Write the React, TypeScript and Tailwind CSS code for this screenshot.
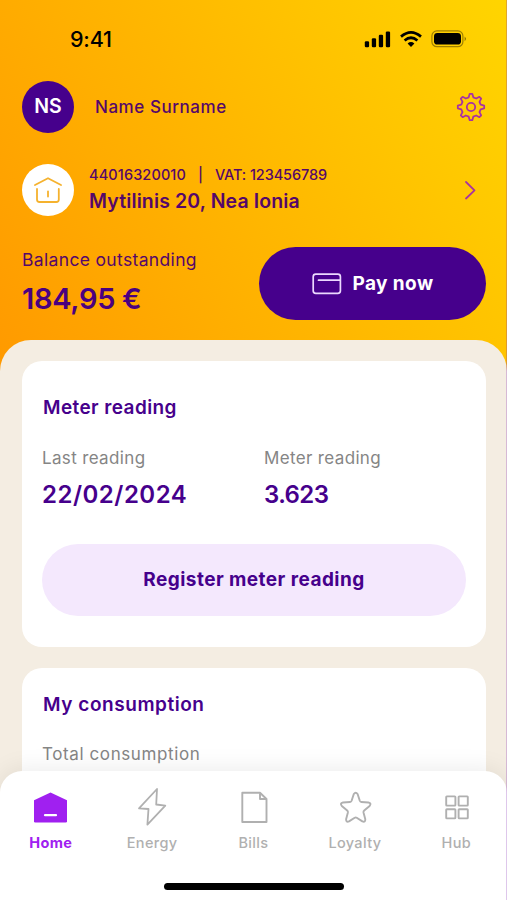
const navItems = [
  { name: "Home", icon: HomeIcon, active: true },
  { name: "Energy", icon: EnergyIcon, active: false },
  { name: "Bills", icon: BillsIcon, active: false },
  { name: "Loyalty", icon: LoyaltyIcon, active: false },
  { name: "Hub", icon: HubIcon, active: false },
];

const readings = [
  { label: "Last reading", value: "22/02/2024", valueClass: "tracking-[0.5px]" },
  { label: "Meter reading", value: "3.623", valueClass: "tracking-[-0.6px]" },
];

function HomeIcon() {
  return (
    <svg width="36" height="36" viewBox="0 0 36 36">
      <path d="M17.5 3.6 34 11.2V32.2Q34 33.5 32.7 33.5H2.3Q1 33.5 1 32.2V11.2Z" fill="#a020f0" />
      <path d="M12 26.2h11" stroke="#fff" strokeWidth="2.2" strokeLinecap="round" />
    </svg>
  );
}

function EnergyIcon() {
  return (
    <svg width="36" height="40" viewBox="0 0 36 40" fill="none" stroke="#b0b0b0" strokeWidth="1.8" strokeLinejoin="round">
      <path d="M23 2 5 21.3 14.5 22 13.4 37.6 31.3 18.6 22.2 17.5Z" />
    </svg>
  );
}

function BillsIcon() {
  return (
    <svg width="36" height="36" viewBox="0 0 36 36" fill="none" stroke="#b0b0b0" strokeWidth="1.9" strokeLinejoin="round">
      <path d="M6.3 3.8H24L30.5 10V33H6.3Z" />
      <path d="M24 4.3V10H30" />
    </svg>
  );
}

function LoyaltyIcon() {
  return (
    <svg width="36" height="36" viewBox="0 0 36 36" fill="none" stroke="#b0b0b0" strokeWidth="1.9" strokeLinejoin="round">
      <path transform="translate(0.4 0.6)" d="M16.4 4.4Q18.3 1.8 20.2 4.4L22.4 11.2Q22.8 12.3 24 12.4L31 12.9Q34.4 13.5 32.2 16.4L26.8 20.9Q25.9 21.7 26.1 22.9L27.9 29.6Q28 33 25 31.8L19.3 28.2Q18.3 27.6 17.3 28.2L11.6 31.8Q8.6 33 8.7 29.6L10.5 22.9Q10.7 21.7 9.8 20.9L4.4 16.4Q2.2 13.5 5.6 12.9L12.6 12.4Q13.8 12.3 14.2 11.2Z" />
    </svg>
  );
}

function HubIcon() {
  return (
    <svg width="36" height="36" viewBox="0 0 36 36" fill="none" stroke="#b0b0b0" strokeWidth="1.9">
      <rect x="8.2" y="7.4" width="9.2" height="9.2" rx="0.6" />
      <rect x="20.6" y="7.4" width="9.2" height="9.2" rx="0.6" />
      <rect x="8.2" y="20.2" width="9.2" height="9.2" rx="0.6" />
      <rect x="20.6" y="20.2" width="9.2" height="9.2" rx="0.6" />
    </svg>
  );
}

function StatusBar() {
  return (
    <div className="flex h-[78px] items-center justify-between pl-[70px] pr-[40px] text-black">
      <span className="pt-px text-[21.5px] font-medium leading-none tracking-[-0.2px]">9:41</span>
      <svg width="103" height="20" viewBox="0 0 103 20">
        <rect x="0.8" y="12.3" width="4.3" height="6" rx="1.2" />
        <rect x="7.8" y="9.2" width="4.3" height="9.1" rx="1.2" />
        <rect x="14.8" y="5.8" width="4.3" height="12.5" rx="1.2" />
        <rect x="21.8" y="2.5" width="4.3" height="15.8" rx="1.2" />
        <path d="M37 7.6Q47-.8 57 7.6M40.6 11.5Q47 6 53.4 11.5" fill="none" stroke="#000" strokeWidth="2.7" />
        <path d="M43.6 14.4Q47 11.7 50.4 14.4L47 18Z" />
        <rect x="67.9" y="1.9" width="31" height="15.8" rx="5" fill="none" stroke="#000" strokeOpacity="0.38" strokeWidth="1.2" />
        <rect x="70" y="4" width="27" height="11.6" rx="3.4" />
        <path d="M100.6 7.4Q103.4 9.8 100.6 12.2Z" fillOpacity="0.45" />
      </svg>
    </div>
  );
}

function GearIcon() {
  return (
    <svg width="30" height="30" viewBox="0 0 30 30" fill="none" stroke="#a832a2" strokeWidth="1.8" strokeLinejoin="round">
      <path d="M12.7 5.3 13.7 1.8H16.3L17.3 5.3 20.2 6.5 23.4 4.8 25.2 6.6 23.5 9.8 24.7 12.7 28.2 13.7V16.3L24.7 17.3 23.5 20.2 25.2 23.4 23.4 25.2 20.2 23.5 17.3 24.7 16.3 28.2H13.7L12.7 24.7 9.8 23.5 6.6 25.2 4.8 23.4 6.5 20.2 5.3 17.3 1.8 16.3V13.7L5.3 12.7 6.5 9.8 4.8 6.6 6.6 4.8 9.8 6.5Z" />
      <circle cx="15" cy="15" r="4.2" />
    </svg>
  );
}

export default function App() {
  return (
    <div className="relative h-[900px] w-[507px] overflow-hidden bg-[#f4ede2] font-['Inter',sans-serif] whitespace-nowrap">
      {/* Header */}
      <header className="h-[380px] bg-[linear-gradient(60deg,#ff9900_0%,#ffb700_50%,#ffd500_100%)] text-[#55076a]">
        <StatusBar />

        <div className="flex h-[58px] items-center pl-[22px] pr-[21px]">
          <div className="flex size-[52px] items-center justify-center rounded-full bg-[#46008c] text-[19.5px] font-semibold text-white">
            NS
          </div>
          <span className="ml-[21px] flex-1 pt-[2px] text-[17px] font-medium tracking-[0.55px]">Name Surname</span>
          <GearIcon />
        </div>

        <div className="mt-[28px] flex h-[52px] items-center pl-[22px] pr-[31px]">
          <div className="flex size-[52px] items-center justify-center rounded-full bg-white">
            <svg width="30" height="28" viewBox="0 0 30 28" fill="none" stroke="#f5b22e" strokeWidth="1.8" strokeLinecap="round" strokeLinejoin="round">
              <path d="M2 9 15 2.2 28 9" />
              <path d="M4 13V23.5Q4 26 6.5 26H23.3Q25.8 26 25.8 23.5V13" />
              <path d="M15 15.5V20.5" />
            </svg>
          </div>
          <div className="ml-[15px] flex-1 pb-[5px]">
            <p className="text-[14.5px] font-medium leading-[26px] tracking-[-0.1px]">
              <span className="tracking-[0.12px]">44016320010</span><span className="mx-[12px]">|</span>VAT: 123456789
            </p>
            <p className="text-[19.5px] font-semibold leading-[26px] tracking-[0.12px]">Mytilinis 20, Nea Ionia</p>
          </div>
          <svg width="12" height="20" viewBox="0 0 12 20" fill="none" stroke="#a832a2" strokeWidth="1.8" strokeLinecap="round" strokeLinejoin="round">
            <path d="M2 2 10.5 10.3 2 18.5" />
          </svg>
        </div>

        <div className="mt-[31px] flex h-[73px] justify-between pl-[22px] pr-[21px]">
          <div>
            <p className="text-[17.5px] leading-[26px] tracking-[0.34px]">Balance outstanding</p>
            <p className="mt-[6px] text-[29px] font-semibold leading-[40px] tracking-[-0.3px] text-[#4a0080]">184,95 €</p>
          </div>
          <button className="flex w-[227px] items-center justify-center gap-[11px] rounded-full bg-[#46008c] text-[19px] font-bold tracking-[0.4px] text-white">
            <svg width="30" height="22" viewBox="0 0 30 22" fill="none" stroke="#ecd9ff" strokeWidth="1.7" strokeLinecap="round">
              <rect x="1.2" y="1.2" width="27.2" height="19.2" rx="2.6" />
              <path d="M6.5 7.2H28" />
            </svg>
            <span className="pt-px">Pay now</span>
          </button>
        </div>
      </header>

      {/* Content sheet */}
      <main className="relative -mt-[40px] h-[560px] rounded-t-[31px] bg-[#f4ede2] pl-[22px] pr-[21px] pt-[21px] text-[#46008c]">
        <section className="h-[286px] rounded-[20px] bg-white px-[20px] pt-[33px]">
          <h2 className="pl-px text-[19px] font-semibold leading-[28px] tracking-[0.4px]">Meter reading</h2>
          <div className="mt-[22px] flex">
            {readings.map(({ label, value, valueClass }) => (
              <div key={label} className="w-[222px] shrink-0">
                <p className="text-[17px] leading-[28px] tracking-[0.35px] text-[#858585]">{label}</p>
                <p className={`mt-[6px] text-[24px] font-semibold leading-[34px] ${valueClass}`}>{value}</p>
              </div>
            ))}
          </div>
          <button className="mt-[32px] h-[72px] w-full rounded-full bg-[#f4e8fd] text-[19px] font-bold tracking-[0.45px]">
            Register meter reading
          </button>
        </section>

        <section className="mt-[21px] h-[220px] rounded-[20px] bg-white px-[20px] pt-[23px]">
          <h2 className="pl-px text-[19px] font-semibold leading-[28px] tracking-[0.55px]">My consumption</h2>
          <p className="mt-[21px] text-[17px] leading-[28px] tracking-[0.6px] text-[#858585]">Total consumption</p>
        </section>
      </main>

      {/* Tab bar */}
      <nav className="absolute inset-x-0 bottom-0 h-[129px] rounded-t-[22px] bg-white shadow-[0_-2px_24px_rgba(0,0,0,0.08)]">
        <div className="flex">
          {navItems.map(({ name, icon: Icon, active }) => (
            <div key={name} className="flex flex-1 flex-col items-center pt-[16px]">
              <div className="flex h-[40px] items-center">
                <Icon />
              </div>
              <span className={`mt-[6px] text-[14.5px] leading-[20px] tracking-[0.35px] ${active ? "font-bold text-[#a020f0]" : "font-medium text-[#b0b0b0]"}`}>
                {name}
              </span>
            </div>
          ))}
        </div>
        <div className="mx-auto mt-[30px] h-[7px] w-[180px] rounded-full bg-black" />
      </nav>

      {/* Screen edge */}
      <div className="absolute inset-y-0 right-0 w-px bg-[#7a20b0]/25" />
    </div>
  );
}
